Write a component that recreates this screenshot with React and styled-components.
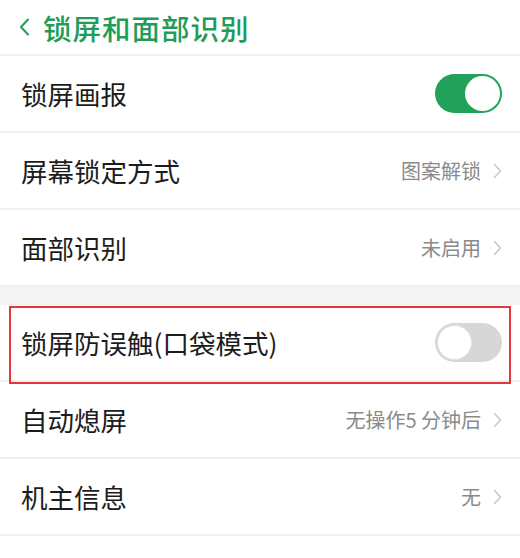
import React from "react";
import styled, { createGlobalStyle } from "styled-components";

const GlobalStyle = createGlobalStyle`
  body {
    margin: 0;
    background: #ffffff;
    font-family: "Noto Sans CJK SC", "Noto Sans", sans-serif;
  }
`;

const groups = [
  [
    { label: "锁屏画报", toggle: true, on: true },
    { label: "屏幕锁定方式", value: "图案解锁" },
    { label: "面部识别", value: "未启用" },
  ],
  [
    { label: "锁屏防误触(口袋模式)", toggle: true, on: false, marked: true },
    { label: "自动熄屏", value: "无操作5 分钟后" },
    { label: "机主信息", value: "无" },
  ],
];

const Chevron = ({ color = "#c9c9c9", w = 9, h = 16, sw = 1.6 }) => (
  <svg width={w} height={h} viewBox="0 0 9 16" fill="none">
    <polyline
      points="1.5,1.5 7.5,8 1.5,14.5"
      stroke={color}
      strokeWidth={sw}
      strokeLinecap="round"
      strokeLinejoin="round"
    />
  </svg>
);

const App = () => {
  return (
    <Page>
      <GlobalStyle />
      <Header>
        <BackIcon>
          <svg width="11" height="18" viewBox="0 0 11 18" fill="none">
            <polyline
              points="9,1.5 2,9 9,16.5"
              stroke="#1f9c58"
              strokeWidth="2"
              strokeLinecap="round"
              strokeLinejoin="round"
            />
          </svg>
        </BackIcon>
        <Title>锁屏和面部识别</Title>
      </Header>

      {groups.map((group, gi) => (
        <Group key={gi} $first={gi === 0}>
          {group.map((item) => (
            <Row key={item.label}>
              <Label>{item.label}</Label>
              {item.toggle ? (
                <Switch $on={item.on}>
                  <Knob $on={item.on} />
                </Switch>
              ) : (
                <Right>
                  <Value>{item.value}</Value>
                  <Chevron />
                </Right>
              )}
              {item.marked && <Marker />}
            </Row>
          ))}
        </Group>
      ))}
    </Page>
  );
};

export default App;

const Page = styled.div`
  width: 520px;
  height: 558px;
  background: #ffffff;
  overflow: hidden;
`;

const Header = styled.div`
  height: 56px;
  box-sizing: border-box;
  border-bottom: 2px solid #efefef;
  display: flex;
  align-items: center;
  padding-left: 19px;
`;

const BackIcon = styled.div`
  display: flex;
  align-items: center;
  margin-right: 13px;
`;

const Title = styled.div`
  font-size: 28.5px;
  font-weight: 500;
  color: #1f9c58;
  letter-spacing: 1px;
`;

const Group = styled.div`
  border-top: ${(p) => (p.$first ? "none" : "18px solid #f4f4f4")};
`;

const Row = styled.div`
  position: relative;
  height: 77px;
  box-sizing: border-box;
  border-bottom: 2px solid #efefef;
  display: flex;
  align-items: center;
  justify-content: space-between;
  padding: 0 18px 0 21px;
`;

const Label = styled.div`
  font-size: 26.5px;
  color: #1c1c1c;
`;

const Right = styled.div`
  display: flex;
  align-items: center;
  gap: 12px;
`;

const Value = styled.div`
  font-size: 20px;
  color: #8a8a8a;
`;

const Switch = styled.div`
  width: 67px;
  height: 39px;
  border-radius: 20px;
  box-sizing: border-box;
  padding: 2px;
  background: ${(p) => (p.$on ? "#22a15b" : "#d7d7d7")};
  display: flex;
  justify-content: ${(p) => (p.$on ? "flex-end" : "flex-start")};
`;

const Knob = styled.div`
  width: 35px;
  height: 35px;
  border-radius: 50%;
  background: #ffffff;
  box-sizing: border-box;
  border: ${(p) => (p.$on ? "none" : "1px solid #e2e2e2")};
`;

const Marker = styled.div`
  position: absolute;
  left: 9px;
  right: 9px;
  top: 1px;
  bottom: -4px;
  border: 2px solid #e8343c;
  pointer-events: none;
`;
